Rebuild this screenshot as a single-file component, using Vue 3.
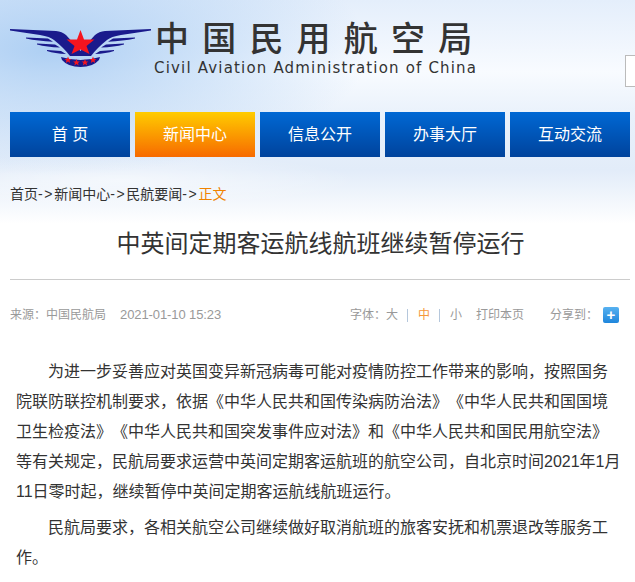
<script setup>
const navItems = [
  { label: '首 页' },
  { label: '新闻中心', active: true },
  { label: '信息公开' },
  { label: '办事大厅' },
  { label: '互动交流' }
];

const crumbs = ['首页', '新闻中心', '民航要闻'];

const paragraphs = [
  '为进一步妥善应对英国变异新冠病毒可能对疫情防控工作带来的影响，按照国务院联防联控机制要求，依据《中华人民共和国传染病防治法》《中华人民共和国国境卫生检疫法》《中华人民共和国突发事件应对法》和《中华人民共和国民用航空法》等有关规定，民航局要求运营中英间定期客运航班的航空公司，自北京时间2021年1月11日零时起，继续暂停中英间定期客运航线航班运行。',
  '民航局要求，各相关航空公司继续做好取消航班的旅客安抚和机票退改等服务工作。'
];
</script>

<template>
  <div class="page">
    <div class="top">
      <header class="masthead">
        <svg class="emblem" viewBox="0 0 141 38" aria-hidden="true">
          <g fill="#1a1a8c">
            <path d="M0 0 L46 2 Q52 2.5 56 6 L70.5 22 L85 6 Q89 2.5 95 2 L141 0 L141 1.5 L111 6 Q101 7.5 97 11 Q87 19 81 27 L60 27 Q54 19 44 11 Q40 7.5 30 6 L0 1.5 Z" />
            <path d="M16 8.5 L38 9.5 L43 12.8 Q28 12 16 9.5 Z M125 8.5 L103 9.5 L98 12.8 Q113 12 125 9.5 Z" />
            <path d="M27 14.5 L45 15.5 L50 18.6 Q37 18 27 15.5 Z M114 14.5 L96 15.5 L91 18.6 Q104 18 114 15.5 Z" />
            <path d="M37 21 L51 22 L56 25 Q45 24.5 37 22 Z M104 21 L90 22 L85 25 Q96 24.5 104 22 Z" />
            <path d="M51 28 Q70.5 34 90 28 L89 31 Q83 38 70.5 38 Q58 38 52 31 Z" />
          </g>
          <polygon fill="#f5141e" points="70.5,1 74,10.5 84.5,10.5 76.5,17 79.5,25 70.5,20.5 61.5,25 64.5,17 56.5,10.5 67,10.5" />
          <g fill="#f5141e">
            <polygon points="58,27.5 59,30 61.4,30 59.5,31.5 60.2,33.9 58,32.5 55.8,33.9 56.5,31.5 54.6,30 57,30" />
            <polygon points="66.5,30 67.5,32.5 69.9,32.5 68,34 68.7,36.4 66.5,35 64.3,36.4 65,34 63.1,32.5 65.5,32.5" />
            <polygon points="75,30 76,32.5 78.4,32.5 76.5,34 77.2,36.4 75,35 72.8,36.4 73.5,34 71.6,32.5 74,32.5" />
            <polygon points="83,27.5 84,30 86.4,30 84.5,31.5 85.2,33.9 83,32.5 80.8,33.9 81.5,31.5 79.6,30 82,30" />
          </g>
        </svg>
        <div class="site-name">
          <div class="site-cn">中国民用航空局</div>
          <div class="site-en">Civil Aviation Administration of China</div>
        </div>
        <div class="search-box"></div>
      </header>

      <nav class="nav">
        <a v-for="item in navItems" :key="item.label" class="nav-item" :class="{ active: item.active }">{{ item.label }}</a>
      </nav>

      <div class="crumbs">
        <template v-for="c in crumbs" :key="c">{{ c }}<span class="crumb-arrow">-&gt;</span></template><span class="crumb-current">正文</span>
      </div>
    </div>

    <h1 class="title">中英间定期客运航线航班继续暂停运行</h1>

    <div class="meta">
      <div class="meta-left">
        <span>来源：中国民航局</span>
        <span class="date">2021-01-10 15:23</span>
      </div>
      <div class="meta-right">
        <span>字体：</span>
        <span>大</span>
        <i class="sep"></i>
        <span class="size-on">中</span>
        <i class="sep"></i>
        <span>小</span>
        <span class="print">打印本页</span>
        <span class="share">分享到：</span>
        <span class="share-btn"></span>
      </div>
    </div>

    <article class="content">
      <p v-for="(text, i) in paragraphs" :key="i">{{ text }}</p>
    </article>
  </div>
</template>

<style>
html, body {
  margin: 0;
  overflow: hidden;
  background: #fff;
}
</style>

<style scoped>
.page {
  width: 635px;
  height: 582px;
  overflow: hidden;
  font-family: "Liberation Sans", "Noto Sans CJK SC", sans-serif;
  color: #333;
}

.top {
  height: 224px;
  padding-top: 1px;
  box-sizing: border-box;
  background:
    radial-gradient(ellipse 320px 125px at 50px 50px, rgba(170, 205, 243, 0.95), rgba(170, 205, 243, 0) 100%),
    radial-gradient(ellipse 240px 26px at 120px 180px, rgba(255, 255, 255, 0.55), transparent),
    linear-gradient(180deg, #e4eefb 0, #f8fbff 32%, #e9f1fb 52%, #e2ecf9 76%, #fff 100%);
}

.masthead {
  display: flex;
  height: 111px;
  box-sizing: border-box;
  padding: 17px 0 0 10px;
}

.emblem {
  width: 141px;
  height: 38px;
  margin-top: 11px;
  flex: none;
}

.site-name {
  margin-left: 3px;
  white-space: nowrap;
}

.site-cn {
  margin-left: 1px;
  font-size: 34px;
  line-height: 42px;
  letter-spacing: 13.2px;
  font-weight: 500;
  color: #333;
}

.site-en {
  margin-top: -1px;
  font-family: "DejaVu Sans", sans-serif;
  font-size: 15px;
  line-height: 18px;
  letter-spacing: 1.18px;
  color: #333;
}

.search-box {
  margin: 37px 0 0 auto;
  width: 10px;
  height: 32px;
  box-sizing: border-box;
  border: 1px solid #bbb;
  border-right: 0;
  background: #fff;
}

.nav {
  display: flex;
  gap: 5px;
  padding-left: 10px;
}

.nav-item {
  width: 120px;
  height: 45px;
  line-height: 45px;
  text-align: center;
  font-size: 16px;
  color: #fff;
  background: linear-gradient(180deg, #0068d4, #00439c);
}

.nav-item.active {
  background: linear-gradient(180deg, #ffcc00, #f76a00);
}

.crumbs {
  margin-top: 27px;
  padding-left: 10px;
  font-size: 14px;
  line-height: 20px;
  color: #333;
}

.crumb-arrow {
  letter-spacing: 1.65px;
}

.crumb-current {
  color: #f08300;
}

.title {
  margin: 2px 0 0;
  padding-left: 6px;
  font-size: 24px;
  line-height: 36px;
  font-weight: 400;
  text-align: center;
  color: #333;
}

.meta {
  margin: 17px 5px 0 10px;
  border-top: 1px solid #ccc;
  padding-top: 25px;
  display: flex;
  justify-content: space-between;
  font-size: 12px;
  line-height: 20px;
  color: #999;
}

.date {
  margin-left: 14px;
  font-size: 13px;
  letter-spacing: -0.1px;
}

.meta-right {
  display: flex;
  align-items: center;
  padding-right: 11px;
}

.sep {
  width: 1px;
  height: 13px;
  margin: 0 9.5px;
  background: #b5c7dc;
}

.size-on {
  color: #f5973a;
}

.print {
  margin-left: 14px;
}

.share {
  margin-left: 26px;
}

.share-btn {
  position: relative;
  width: 16px;
  height: 16px;
  margin-left: 5px;
  border-radius: 2px;
  background: linear-gradient(180deg, #57b1f0, #1f86dc);
}

.share-btn::before {
  content: "+";
  position: absolute;
  inset: 0;
  text-align: center;
  font: bold 15px/15px "Liberation Sans", sans-serif;
  color: #fff;
}

.content {
  margin-top: 32px;
  padding: 0 13px 0 16px;
  font-size: 16px;
  line-height: 30px;
  color: #333;
  text-spacing-trim: space-all;
}

.content p {
  margin: 0 0 6px;
  text-indent: 32px;
}
</style>
